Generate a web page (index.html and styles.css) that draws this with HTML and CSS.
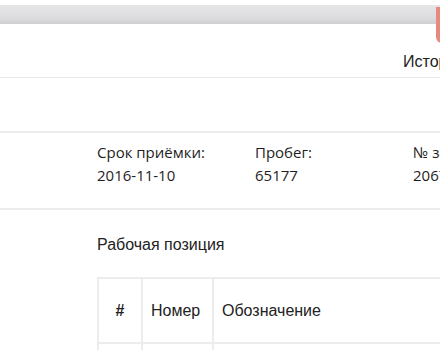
FILE: index.html
```html
<!DOCTYPE html>
<html lang="ru">
<head>
  <meta charset="UTF-8" />
  <title>Заказ-наряд</title>
  <link rel="stylesheet" href="styles.css">
</head>
<body>

<div class="topbar"></div>
<div class="tag"></div>

<div class="toolbar">
  <span class="tab">История</span>
</div>

<div class="blank"></div>

<div class="info">
  <div class="field">
    <div class="label">Срок приёмки:</div>
    <div class="value">2016-11-10</div>
  </div>
  <div class="field">
    <div class="label">Пробег:</div>
    <div class="value">65177</div>
  </div>
  <div class="field">
    <div class="label">№ заказа:</div>
    <div class="value">2067</div>
  </div>
</div>

<div class="section">
  <h2>Рабочая позиция</h2>
  <table class="grid">
    <tr>
      <th class="num">#</th>
      <th class="code">Номер</th>
      <th>Обозначение</th>
    </tr>
    <tr>
      <td></td>
      <td></td>
      <td></td>
    </tr>
  </table>
</div>

</body>
</html>
```

FILE: styles.css
```css
body {
  margin: 0;
  font-family: "Liberation Sans", Arial, sans-serif;
  color: #222;
  background: #fff;
  overflow: hidden;
  width: 440px;
  height: 350px;
}
.topbar {
  margin-top: 5px;
  height: 19px;
  background: linear-gradient(#e6e6e8, #dcdcde 70%, #cfcfd1);
}
.tag {
  position: absolute;
  left: 436px;
  top: 7px;
  width: 20px;
  height: 36px;
  background: #e48a7e;
  border-radius: 0 0 6px 6px;
}
.toolbar {
  height: 54px;
  border-bottom: 1px solid #e8e8e8;
  white-space: nowrap;
  padding-left: 403px;
  box-sizing: border-box;
}
.tab {
  display: inline-block;
  margin-top: 29px;
  font-size: 16px;
}
.blank {
  height: 53px;
  border-bottom: 2px solid #ececec;
}
.info {
  display: flex;
  padding: 8px 0 0 97px;
  height: 77px;
  box-sizing: border-box;
  border-bottom: 2px solid #ececec;
  font-family: "Open Sans", "Noto Sans", sans-serif;
  font-size: 15px;
  color: #1e1e1e;
  white-space: nowrap;
}
.field {
  width: 158px;
  flex: none;
}
.label {
  line-height: 22px;
}
.value {
  line-height: 22px;
  margin-top: 1px;
}
.section {
  padding-left: 97px;
}
h2 {
  margin: 25px 0 0;
  font-size: 16px;
  font-weight: normal;
  line-height: 20px;
}
.grid {
  margin-top: 22px;
  border-collapse: collapse;
  width: 400px;
}
.grid th,
.grid td {
  border: 2px solid #ececec;
  text-align: left;
  font-weight: normal;
  font-size: 16px;
  padding: 0 8px;
}
.grid th {
  height: 63px;
}
.grid td {
  height: 40px;
}
.grid th.num {
  width: 26px;
  text-align: center;
  font-weight: bold;
}
.grid th.code {
  width: 53px;
}
```
